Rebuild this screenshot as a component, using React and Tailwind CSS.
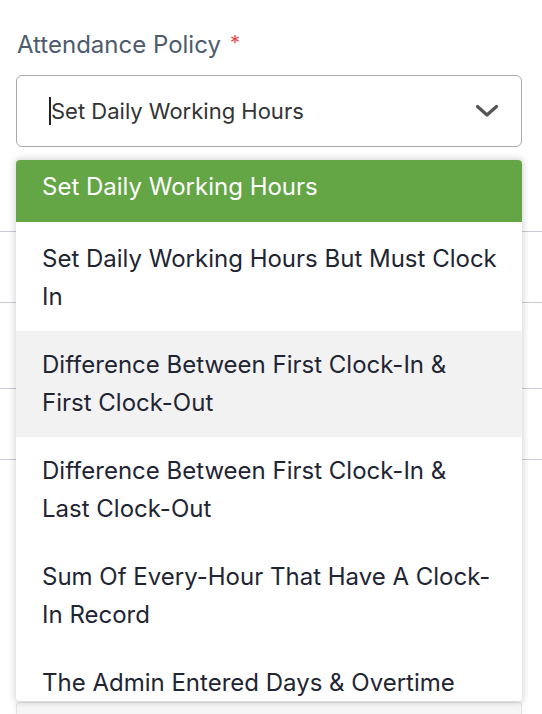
import React from 'react';

const options = [
  'Set Daily Working Hours',
  'Set Daily Working Hours But Must Clock In',
  'Difference Between First Clock-In & First Clock-Out',
  'Difference Between First Clock-In & Last Clock-Out',
  'Sum Of Every-Hour That Have A Clock-In Record',
  'The Admin Entered Days & Overtime',
];

const App = () => {
  const selected = 0;
  const hovered = 2;

  return (
    <div className="relative w-[542px] h-[714px] overflow-hidden bg-white font-['Inter',sans-serif]">
      {/* Field */}
      <div className="px-4 pt-[30px]">
        <label className="flex items-start pl-px text-[24px] leading-[30px] text-[#4d5b6c]">
          Attendance Policy
          <span className="ml-[9px] -mt-[2px] text-[20px] text-[#e5484d]">*</span>
        </label>
        <div className="mt-[15px] h-[72px] w-[506px] flex items-center justify-between rounded-md border border-[#a9a9a9] pl-8 pr-[22px]">
          <div className="flex items-center">
            <span className="w-[2px] h-[28px] bg-[#222]" />
            <span className="text-[22px] text-[#333]">Set Daily Working Hours</span>
          </div>
          <svg width="24" height="14" viewBox="0 0 24 14" fill="none">
            <path d="M2.5 2.5 L12 11 L21.5 2.5" stroke="#555" strokeWidth="3.2" strokeLinecap="round" strokeLinejoin="round" />
          </svg>
        </div>
      </div>

      {/* Underlying rows peeking out at the left */}
      <div className="mt-[13px]">
        <div className="h-[72px] border-b border-[#c9cad3]" />
        <div className="h-[71px] border-b border-[#c9cad3]" />
        <div className="h-[86px] border-b border-[#c9cad3]" />
        <div className="h-[71px] border-b border-[#c9cad3]" />
      </div>

      {/* Card below the menu */}
      <div className="absolute left-4 top-[702px] w-[506px] h-[40px] rounded-t border-t border-x border-[#e3e3e3] bg-[#f6f6f6] shadow-[0_-2px_6px_rgba(0,0,0,0.06)]" />

      {/* Open menu, scrolled a little */}
      <div className="absolute left-4 top-[160px] w-[506px] h-[541px] overflow-hidden rounded-sm bg-white shadow-[0_0_6px_2px_rgba(0,0,0,0.14)]">
        <div className="-mt-[7px]">
          {options.map((opt, i) => (
            <div
              key={opt}
              className={`pl-[26px] pr-6 text-[24px] leading-[38px] ${
                i === selected
                  ? 'pt-[15px] pb-[16px] bg-[#64a546] text-white'
                  : i === selected + 1
                  ? 'pt-[18px] pb-[15px] bg-white text-[#1f2533]'
                  : i === hovered
                  ? 'py-[15px] bg-[#f2f2f2] text-[#1f2533]'
                  : 'py-[15px] bg-white text-[#1f2533]'
              }`}
            >
              {opt}
            </div>
          ))}
        </div>
      </div>
    </div>
  );
};

export default App;
